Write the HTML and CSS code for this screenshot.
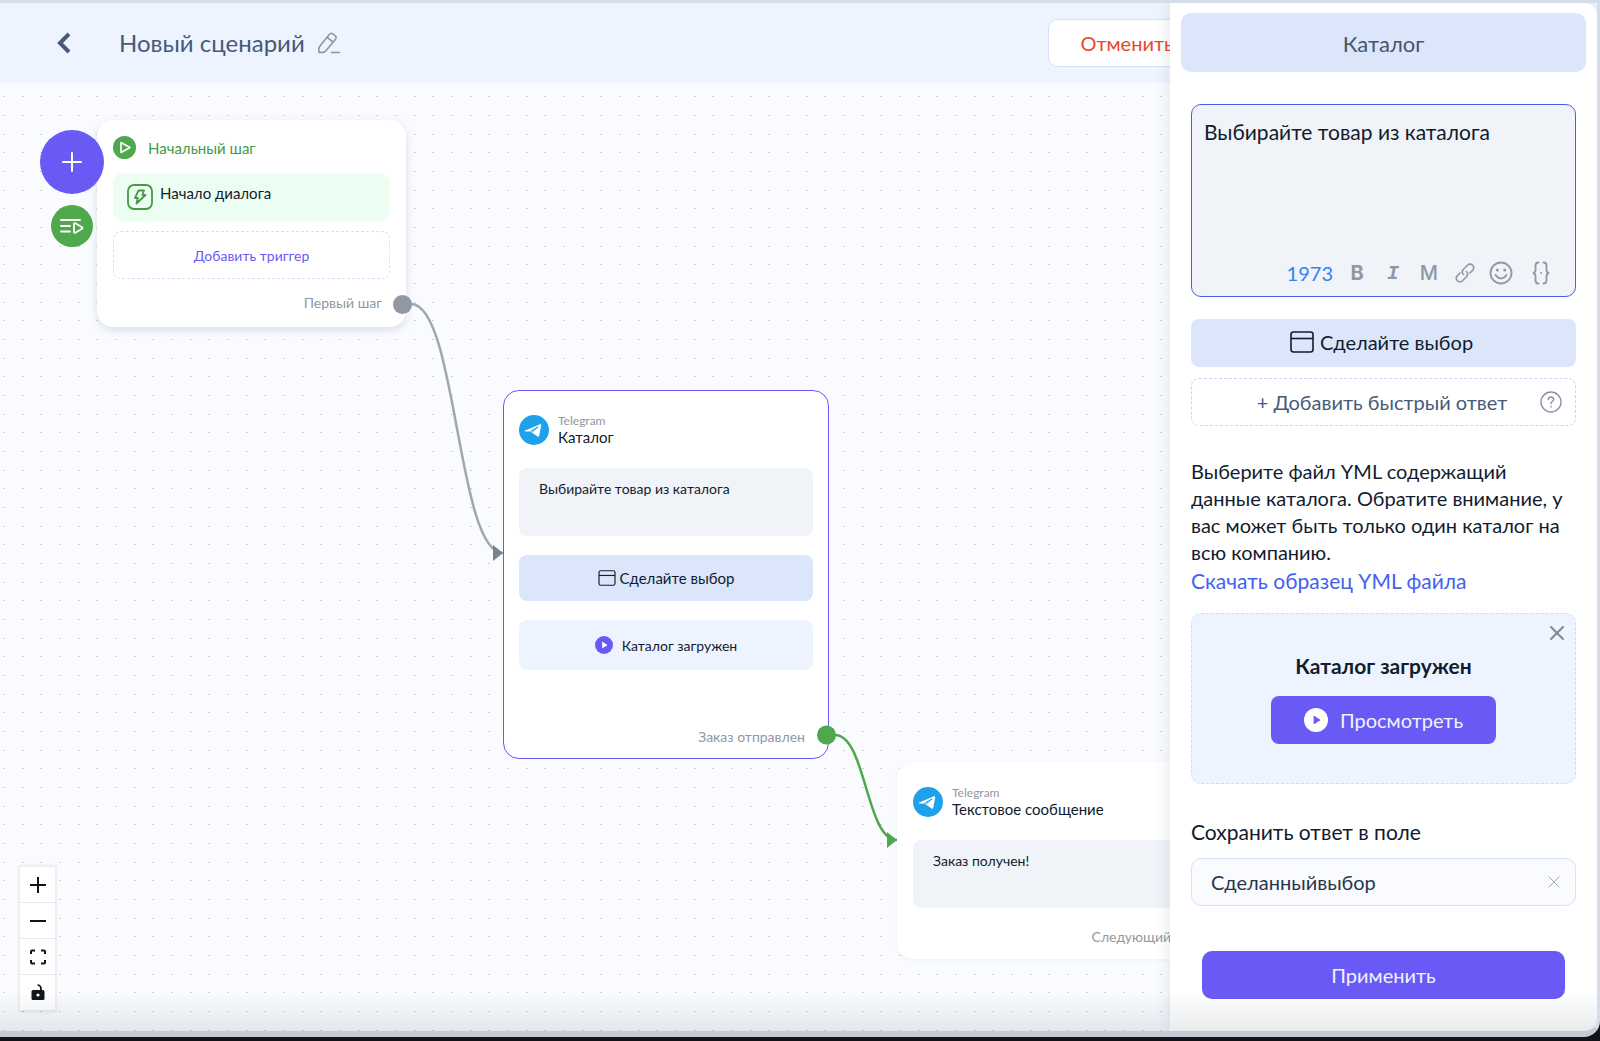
FILE: index.html
```html
<!DOCTYPE html>
<html lang="ru">
<head>
<meta charset="utf-8">
<meta name="viewport" content="width=device-width, initial-scale=1">
<title>Новый сценарий</title>
<link rel="stylesheet" href="styles.css">
</head>
<body>
<svg class="defs" width="0" height="0" aria-hidden="true">
  <symbol id="telegram" viewBox="0 0 30 30">
    <circle cx="15" cy="15" r="15" fill="#1da1ea"/>
    <path d="M6.200 15.600 21 9.300c.8-.3 1.400.2 1.200 1.100l-2 10.400c-.2.9-.8 1.200-1.600.7l-7.300-4.900-4.900-.2c-.7-.1-.8-.5-.2-.8z" fill="#fff"/>
    <path d="M11.400 16.400 19.200 11.800 12.800 17.300" fill="none" stroke="#1da1ea" stroke-width="1"/>
  </symbol>
  <symbol id="card" viewBox="0 0 24 22">
    <rect x="1" y="1" width="22" height="20" rx="2.500" fill="none" stroke="currentColor" stroke-width="1.600"/>
    <path d="M1 7.500h22" stroke="currentColor" stroke-width="1.600"/>
  </symbol>
  <symbol id="play" viewBox="0 0 24 24">
    <circle cx="12" cy="12" r="12" fill="currentColor"/>
    <path d="M9.600 8.400v7.200c0 .5.5.7.9.5l5.400-3.500c.4-.3.4-.8 0-1.100l-5.400-3.600c-.4-.2-.9 0-.9.500z"/>
  </symbol>
  <symbol id="cross" viewBox="0 0 14 14">
    <path d="M1 1l12 12M13 1 1 13" fill="none" stroke="currentColor" stroke-linecap="round"/>
  </symbol>
</svg>

<div class="app">
  <header class="topbar">
    <button class="icon-btn back" aria-label="Назад">
      <svg width="14" height="22" viewBox="0 0 14 22"><path d="M12 2 3 11l9 9" fill="none" stroke="#475a78" stroke-width="4"/></svg>
    </button>
    <h1 class="title">Новый сценарий</h1>
    <button class="icon-btn" aria-label="Переименовать">
      <svg width="22" height="22" viewBox="0 0 22 22" fill="none" stroke="#8d95a1" stroke-width="1.600" stroke-linecap="round" stroke-linejoin="round"><path d="M1 20.500l-.2-3.500c0-1.200.3-2 1-2.800L11.300 2.500c1-1.300 2.400-1.500 3.600-.6l2.200 1.700c1.200 1 1.400 2.400.4 3.600L7.700 19c-.8 1-1.600 1.400-2.700 1.400zM9.200 5.300l5.600 4.600M13.500 20.500h8"/></svg>
    </button>
    <button class="cancel">Отменить</button>
  </header>

  <main class="canvas">
    <svg class="layer" width="100%" height="100%" aria-hidden="true">
      <defs>
        <pattern id="dots" width="56" height="56" patternUnits="userSpaceOnUse">
          <g fill="#ccd0d9">
            <rect x="3" y="13" width="2" height="1"/><rect x="22" y="13" width="2" height="1"/><rect x="40" y="13" width="2" height="1"/>
            <rect x="3" y="32" width="2" height="1"/><rect x="22" y="32" width="2" height="1"/><rect x="40" y="32" width="2" height="1"/>
            <rect x="3" y="51" width="2" height="1"/><rect x="22" y="51" width="2" height="1"/><rect x="40" y="51" width="2" height="1"/>
          </g>
        </pattern>
      </defs>
      <rect width="100%" height="100%" fill="url(#dots)"/>
    </svg>

    <section class="node start">
      <div class="start-head">
        <svg width="23" height="23" viewBox="0 0 23 23"><circle cx="11.500" cy="11.500" r="11.500" fill="#4fa84b"/><path d="M8 6.500v10l9-5z" fill="none" stroke="#fff" stroke-width="1.600" stroke-linejoin="round"/></svg>
        <h2>Начальный шаг</h2>
      </div>
      <div class="trigger">
        <svg width="26" height="26" viewBox="0 0 26 26" fill="none" stroke="#459a45" stroke-width="1.800" stroke-linejoin="round"><rect x="1" y="1" width="24" height="24" rx="6"/><path d="M11.500 6.500h5.500l-1.700 4.500h3.200l-9 8.500 1.300-5.500H8z"/></svg>
        <span>Начало диалога</span>
      </div>
      <button class="add-trigger">Добавить триггер</button>
      <div class="out">Первый шаг</div>
    </section>

    <section class="node message catalog">
      <div class="msg-head">
        <svg width="30" height="30"><use href="#telegram"/></svg>
        <div><small>Telegram</small><h2>Каталог</h2></div>
      </div>
      <div class="bubble">Выбирайте товар из каталога</div>
      <button class="choice"><svg width="18" height="16"><use href="#card"/></svg>Сделайте выбор</button>
      <div class="loaded"><svg class="violet" width="18" height="18"><use href="#play"/></svg>Каталог загружен</div>
      <div class="out">Заказ отправлен</div>
    </section>

    <section class="node message text">
      <div class="msg-head">
        <svg width="30" height="30"><use href="#telegram"/></svg>
        <div><small>Telegram</small><h2>Текстовое сообщение</h2></div>
      </div>
      <div class="bubble">Заказ получен!</div>
      <div class="out">Следующий шаг</div>
    </section>

    <svg class="layer edges" width="100%" height="100%" aria-hidden="true">
      <g fill="none" stroke-width="2.500">
        <path d="M411 221C457 221 457 470 503 470" stroke="#a0a8af"/>
        <path d="M835 652C866 652 866 757 897 757" stroke="#4fa84b"/>
      </g>
      <path d="M493 462v16l10-8z" fill="#7a838f"/>
      <path d="M887 749v16l10-8z" fill="#4fa84b"/>
      <circle cx="402.500" cy="221.500" r="9.500" fill="#8f98a3"/>
      <circle cx="826.500" cy="652" r="9.500" fill="#4fa84b"/>
    </svg>

    <div class="tools">
      <button class="round add" aria-label="Добавить">
        <svg width="20" height="20" viewBox="0 0 20 20"><path d="M10 1v18M1 10h18" stroke="#fff" stroke-width="2" stroke-linecap="round"/></svg>
      </button>
      <button class="round run" aria-label="Запустить">
        <svg width="24" height="16" viewBox="0 0 24 16" fill="none" stroke="#fff" stroke-width="1.800" stroke-linecap="round" stroke-linejoin="round"><path d="M1 2h19M1 8h9M1 13.500h9M14 6v8c0 .8.700 1.200 1.400.8l6.600-4c.7-.5.7-1.100 0-1.600l-6.600-4c-.7-.4-1.400 0-1.400.8z"/></svg>
      </button>
    </div>

    <div class="zoom">
      <button aria-label="Приблизить"><svg width="16" height="16" viewBox="0 0 16 16"><path d="M8 0v16M0 8h16" stroke="#111418" stroke-width="2"/></svg></button>
      <button aria-label="Отдалить"><svg width="16" height="16" viewBox="0 0 16 16"><path d="M0 8h16" stroke="#111418" stroke-width="2"/></svg></button>
      <button aria-label="Показать всё"><svg width="16" height="16" viewBox="0 0 16 16"><path d="M1 5V2.500Q1 1.500 2 1.500h3M11 1.500h3q1 0 1 1V5M15 11v2.500q0 1-1 1h-3M5 14.500H2q-1 0-1-1V11" fill="none" stroke="#111418" stroke-width="2"/></svg></button>
      <button aria-label="Заблокировать"><svg width="14" height="17" viewBox="0 0 14 17"><path d="M2 6h7V4.500C9 2.500 8 2 6.500 1.800V.300C9 .300 10.800 2 10.800 4.500V6H12q1.500 0 1.500 1.500v7Q13.500 16 12 16H2Q.500 16 .500 14.500v-7Q.500 6 2 6z" fill="#111418"/><circle cx="7" cy="11" r="1.600" fill="#fff"/></svg></button>
    </div>
  </main>

  <aside class="panel">
    <h2 class="panel-title">Каталог</h2>
    <form class="panel-body" onsubmit="return false">
      <div class="editor">
        <textarea aria-label="Текст сообщения">Выбирайте товар из каталога</textarea>
        <div class="format">
          <output class="left">1973</output>
          <button type="button" class="bold">B</button>
          <button type="button" class="italic">I</button>
          <button type="button" class="mono">M</button>
          <button type="button" aria-label="Ссылка"><svg width="20" height="20" viewBox="0 0 20 20" fill="none" stroke="#8f98a3" stroke-width="1.600" stroke-linecap="round"><path d="M8.500 11.500c-1.600-1.600-1.600-3.600 0-5.200l4-4c1.600-1.600 3.600-1.600 5.100 0s1.500 3.500 0 5.100L15 10M11.500 8.500c1.600 1.600 1.600 3.600 0 5.200l-4 4c-1.600 1.600-3.600 1.600-5.100 0s-1.500-3.500 0-5.100L5 10"/></svg></button>
          <button type="button" aria-label="Эмодзи"><svg width="24" height="24" viewBox="0 0 24 24" fill="none" stroke="#8f98a3" stroke-width="1.800"><circle cx="12" cy="12" r="10.500"/><path d="M6.500 14q5.500 7 11 0" stroke-linecap="round"/><circle cx="8.300" cy="9" r="1.500" fill="#8f98a3" stroke="none"/><circle cx="15.700" cy="9" r="1.500" fill="#8f98a3" stroke="none"/></svg></button>
          <button type="button" class="vars" aria-label="Переменные"><svg width="18" height="24" viewBox="0 0 18 24" fill="none" stroke="#8f98a3" stroke-width="1.800" stroke-linecap="round"><path d="M6.500 1.500C4 1.500 3.500 2.500 3.500 4.500v4.500Q3.500 11.500 1 12q2.500.5 2.500 3v4.500c0 2 .5 3 3 3M11.500 1.500c2.500 0 3 1 3 3v4.500q0 2.500 2.500 3-2.500.5-2.500 3v4.500c0 2-.5 3-3 3"/><circle cx="9" cy="12" r="1" fill="#8f98a3" stroke="none"/></svg></button>
        </div>
      </div>
      <button type="button" class="pick"><svg width="24" height="22"><use href="#card"/></svg>Сделайте выбор</button>
      <div class="quick">
        <button type="button">+ Добавить быстрый ответ</button>
        <svg width="22" height="22" viewBox="0 0 22 22" fill="none" stroke="#8793a5" stroke-width="1.400" stroke-linecap="round"><circle cx="11" cy="11" r="10"/><path d="M8.300 8.500q.2-2.500 2.700-2.500t2.700 2.300c0 2-2.700 2-2.700 4.500"/><path d="M11 15.500v.5"/></svg>
      </div>
      <p class="hint">Выберите файл YML содержащий данные каталога. Обратите внимание, у вас может быть только один каталог на всю компанию.</p>
      <a class="sample" href="#sample">Скачать образец YML файла</a>
      <div class="upload">
        <button type="button" class="icon-btn close" aria-label="Удалить каталог"><svg width="14" height="14" stroke-width="2"><use href="#cross"/></svg></button>
        <h3>Каталог загружен</h3>
        <button type="button" class="view"><svg class="white" width="24" height="24"><use href="#play"/></svg>Просмотреть</button>
      </div>
      <label class="field-label" for="field">Сохранить ответ в поле</label>
      <div class="field">
        <input id="field" type="text" value="Сделанныйвыбор">
        <button type="button" class="icon-btn" aria-label="Очистить"><svg width="12" height="12" stroke-width="1"><use href="#cross"/></svg></button>
      </div>
      <button type="submit" class="apply">Применить</button>
    </form>
  </aside>
  <div class="fade"></div>
</div>
</body>
</html>
```
FILE: styles.css
```css
* { box-sizing: border-box; }
body {
  margin: 0;
  min-height: 100vh;
  display: flex;
  flex-direction: column;
  background: #111318;
  border-bottom: 4px solid #111318;
  font-family: Lato, "Noto Sans", sans-serif;
  color: #111c2d;
}
h1, h2, h3, p { margin: 0; font-weight: 400; }
button, input, textarea { font: inherit; color: inherit; }
button { padding: 0; border: 0; background: none; cursor: pointer; }
svg { display: block; flex: none; }
.defs { position: absolute; }

.app {
  flex: 1;
  position: relative;
  display: flex;
  flex-direction: column;
  overflow: hidden;
  border: solid #d6ddea;
  border-width: 3px 3px 6px 0;
  border-bottom-color: #c4cbd5;
  border-radius: 0 0 16px 0;
  background: #d6ddea;
}

/* Top bar */
.topbar {
  display: flex;
  align-items: center;
  height: 80px;
  padding: 0 389px 0 57px;
  background: #edf4ff;
}
.icon-btn { display: flex; align-items: center; justify-content: center; }
.title { margin: 0 13px 0 48px; font-size: 24px; line-height: 32px; color: #475a78; }
.cancel {
  width: 158px;
  height: 48px;
  margin-left: auto;
  margin-right: 2px;
  border: 1px solid #d5e2fa;
  border-radius: 10px;
  background: #fff;
  font-size: 20px;
  color: #e5492d;
}

/* Canvas */
.canvas { flex: 1; position: relative; overflow: hidden; background: #f9fbff; }
.layer { position: absolute; inset: 0; }
.edges { pointer-events: none; }
.node {
  position: absolute;
  display: flex;
  flex-direction: column;
  border: 1px solid transparent;
  border-radius: 16px;
  background: #fff;
}
.start { left: 97px; top: 37px; width: 309px; height: 207px; padding: 15px; box-shadow: 0 3px 8px #1f355526; }
.start-head { display: flex; align-items: center; gap: 12px; height: 23px; color: #459a45; }
.start-head h2 { font-size: 15px; line-height: 18px; }
.trigger {
  display: flex;
  gap: 7px;
  height: 48px;
  margin-top: 14px;
  padding: 11px 14px;
  border-radius: 10px;
  background: #ecfdf1;
}
.trigger span { font-size: 15px; line-height: 18px; }
.add-trigger {
  height: 48px;
  margin-top: 10px;
  border: 1px dashed #d5e2fa;
  border-radius: 8px;
  font-size: 14px;
  color: #6a5af5;
}
.out { margin-top: auto; padding-right: 8px; text-align: right; font-size: 14px; line-height: 16px; color: #8f98a3; }

.message { width: 326px; padding: 24px 15px 13px; }
.catalog { left: 503px; top: 307px; height: 369px; border-color: #6a5af5; }
.text { left: 897px; top: 679px; height: 197px; box-shadow: 0 1px 4px #1f35550d; }
.msg-head { display: flex; align-items: center; gap: 9px; height: 30px; }
.msg-head small { display: block; font-size: 12px; line-height: 14px; color: #8f98a3; }
.msg-head h2 { font-size: 15px; line-height: 18px; }
.bubble {
  height: 68px;
  margin-top: 23px;
  padding: 12px 20px;
  border-radius: 8px;
  background: #f0f3f8;
  font-size: 14px;
  line-height: 18px;
}
.choice, .loaded { display: flex; align-items: center; justify-content: center; border-radius: 8px; }
.choice { gap: 4px; height: 46px; margin-top: 19px; background: #dce6fb; font-size: 15px; }
.loaded { gap: 9px; height: 50px; margin-top: 19px; background: #edf4ff; font-size: 14px; }
.violet { color: #6a5af5; fill: #fff; }
.white { color: #fff; fill: #6a5af5; }

.tools { position: absolute; left: 40px; top: 47px; display: flex; flex-direction: column; align-items: center; gap: 11px; }
.round { display: flex; align-items: center; justify-content: center; border-radius: 50%; }
.add { width: 64px; height: 64px; background: #6a5af5; }
.run { width: 42px; height: 42px; background: #4fa84b; }

.zoom { position: absolute; left: 20px; bottom: 20px; box-shadow: 0 0 2px 2px #00000010; }
.zoom button {
  display: flex;
  align-items: center;
  justify-content: center;
  width: 35px;
  height: 36px;
  background: #fff;
  border-bottom: 1px solid #e6e9f0;
}

/* Side panel */
.panel {
  position: absolute;
  top: 0;
  right: 0;
  bottom: 0;
  width: 427px;
  padding: 10px 11px;
  border-radius: 0 12px 14px 0;
  background: #fff;
  box-shadow: -2px 0 14px #1f35551a;
}
.panel-title {
  height: 59px;
  border-radius: 10px;
  background: #dce6fb;
  text-align: center;
  font-size: 22px;
  line-height: 62px;
  color: #475569;
}
.panel-body { display: flex; flex-direction: column; padding: 32px 10px 0; font-size: 20px; }
.editor {
  display: flex;
  flex-direction: column;
  height: 193px;
  padding: 11px 12px;
  border: 1px solid #4361ee;
  border-radius: 10px;
  background: #f0f3f8;
}
.editor textarea {
  flex: 1;
  padding: 0;
  border: 0;
  outline: 0;
  resize: none;
  background: none;
  font-size: 21px;
  line-height: 32px;
}
.format { display: flex; align-items: center; justify-content: flex-end; height: 24px; color: #8f98a3; }
.format button { display: flex; align-items: center; justify-content: center; width: 36px; height: 24px; }
.left { margin-right: 6px; color: #2f86f0; }
.format .bold { font-family: Inter, sans-serif; font-weight: 700; font-size: 20px; }
.format .italic { font-family: "Liberation Mono", monospace; font-weight: 700; font-style: italic; font-size: 20px; }
.format .mono { font-family: Inter, sans-serif; font-weight: 500; font-size: 20px; }
.format .vars { width: 44px; }
.pick {
  display: flex;
  align-items: center;
  justify-content: center;
  gap: 6px;
  height: 48px;
  margin-top: 22px;
  padding: 0 4px 2px 0;
  border-radius: 8px;
  background: #dce6fb;
}
.quick {
  display: flex;
  align-items: center;
  height: 48px;
  margin-top: 11px;
  padding-right: 13px;
  border: 1px dashed #c8d7f8;
  border-radius: 8px;
  color: #475a78;
}
.quick button { flex: 1; padding-left: 32px; }
.hint { margin-top: 32px; line-height: 27px; }
.sample { line-height: 30px; color: #4361ee; text-decoration: none; font-size: 21px; }
.upload {
  display: flex;
  flex-direction: column;
  align-items: center;
  height: 171px;
  margin-top: 17px;
  padding: 12px 11px;
  border: 1px dashed #d0dcf6;
  border-radius: 10px;
  background: #edf4ff;
}
.close { align-self: flex-end; color: #7f8894; }
.upload h3 { margin-top: 12px; font-size: 21px; line-height: 28px; font-weight: 700; }
.view {
  display: flex;
  align-items: center;
  justify-content: center;
  gap: 12px;
  width: 225px;
  height: 48px;
  margin-top: 16px;
  border-radius: 8px;
  background: #6a5af5;
  color: #edf4ff;
}
.field-label { margin-top: 34px; font-size: 21px; line-height: 28px; }
.field {
  display: flex;
  align-items: center;
  height: 48px;
  margin-top: 12px;
  padding: 0 15px 0 19px;
  border: 1px solid #d5e2fa;
  border-radius: 10px;
  background: #f9fbff;
  color: #8f98a3;
}
.field input { flex: 1; min-width: 0; padding: 0; border: 0; outline: 0; background: none; color: #27364b; }
.apply { height: 48px; margin: 45px 11px 0; border-radius: 10px; background: #6a5af5; color: #edf4ff; }

.fade {
  position: absolute;
  inset: auto 0 0 0;
  height: 40px;
  pointer-events: none;
  background: linear-gradient(#5a687800, #5a687822);
}
```
